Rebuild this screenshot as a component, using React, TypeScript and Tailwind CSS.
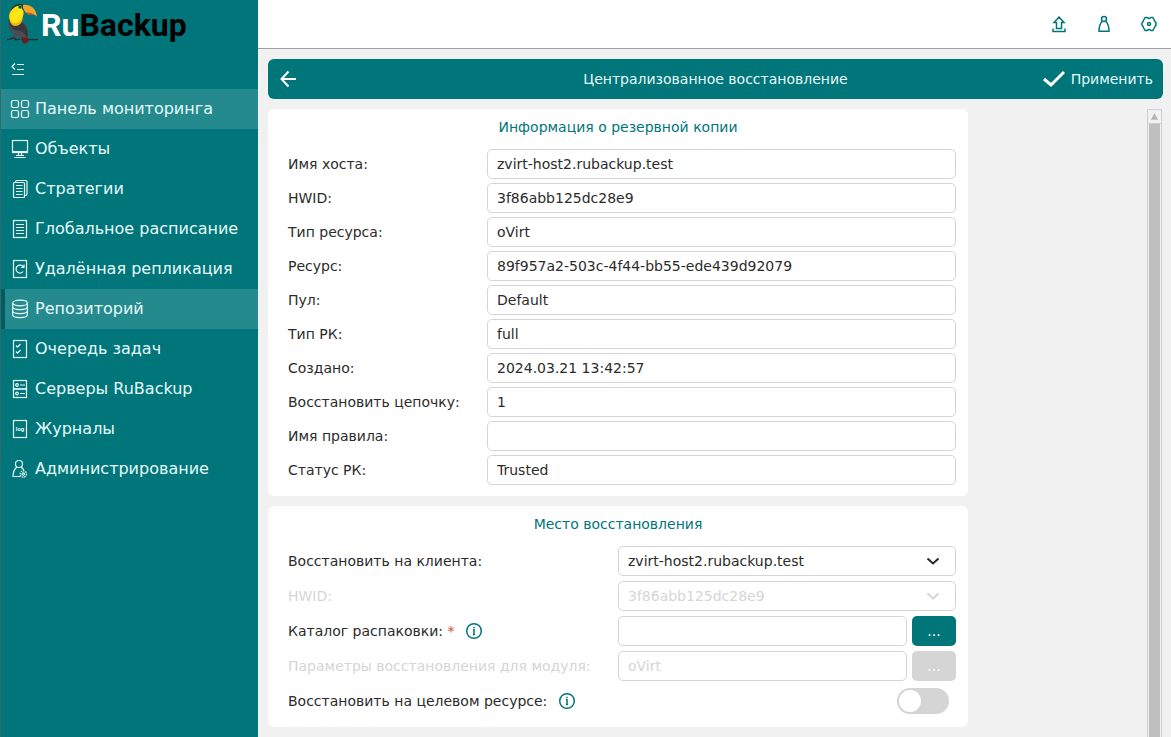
import { useState } from 'react';
import type { ReactNode } from 'react';

const NAV: { label: string; icon: ReactNode; state?: 'hover' | 'current' }[] = [
  {
    label: 'Панель мониторинга',
    state: 'hover',
    icon: (
      <>
        <rect x="1.5" y="1.5" width="7" height="7" rx="1.8" />
        <rect x="11.5" y="1.5" width="7" height="7" rx="1.8" />
        <rect x="1.5" y="11.5" width="7" height="7" rx="1.8" />
        <rect x="11.5" y="11.5" width="7" height="7" rx="1.8" />
      </>
    ),
  },
  {
    label: 'Объекты',
    icon: (
      <>
        <rect x="2.5" y="1.5" width="15" height="12" />
        <path d="M2.5 12.5h15M8.5 13.5v3M11.5 13.5v3M6 16.5h8M4.5 18.5h11" />
      </>
    ),
  },
  {
    label: 'Стратегии',
    icon: (
      <>
        <rect x="3.5" y="3.5" width="11" height="15" rx="1" />
        <path d="M5.5 3.5v-1l1-1h9.5l1 1V15l-1 1.500h-1.500M6 6.500h6.500M6 9.500h6.500M6 12.500h6.500M6 15.500h6.500" />
      </>
    ),
  },
  {
    label: 'Глобальное расписание',
    icon: (
      <>
        <rect x="3.5" y="1.5" width="13" height="17" />
        <path d="M6 5.5h8M6 8.5h8M6 11.5h8M6 14.5h8" />
      </>
    ),
  },
  {
    label: 'Удалённая репликация',
    icon: (
      <>
        <rect x="3.5" y="1.5" width="13" height="17" />
        <path d="M13.2 12.5a4 4 0 1 1 .2-4.6M14 5.5v3h-3" />
      </>
    ),
  },
  {
    label: 'Репозиторий',
    state: 'current',
    icon: (
      <>
        <ellipse cx="10" cy="4" rx="7.3" ry="2.8" />
        <path d="M2.7 4v3.8c0 1.6 3.3 2.8 7.3 2.8s7.3-1.2 7.3-2.8V4M2.7 8v3.8c0 1.6 3.3 2.8 7.3 2.8s7.3-1.2 7.3-2.8V8M2.7 12v3.8c0 1.6 3.3 2.8 7.3 2.8s7.3-1.2 7.3-2.8V12" />
      </>
    ),
  },
  {
    label: 'Очередь задач',
    icon: (
      <>
        <rect x="3.5" y="1.5" width="13" height="17" />
        <path d="M6 6.5l1.5 1.700 3-3.200M6 12.500l1.500 1.700 3-3.200" />
      </>
    ),
  },
  {
    label: 'Серверы RuBackup',
    icon: (
      <>
        <rect x="3.5" y="1.5" width="13" height="8.5" />
        <rect x="3.5" y="10" width="13" height="8.5" />
        <circle cx="7" cy="6" r="1.3" />
        <circle cx="7" cy="14.5" r="1.3" />
        <path d="M10 6h5M10 14.5h5" />
      </>
    ),
  },
  {
    label: 'Журналы',
    icon: (
      <>
        <rect x="3.5" y="1.5" width="13" height="17" />
        <text
          x="10"
          y="12"
          textAnchor="middle"
          className="font-[Roboto,sans-serif] text-[6px] font-bold"
          fill="currentColor"
          stroke="none"
        >
          log
        </text>
      </>
    ),
  },
  {
    label: 'Администрирование',
    icon: (
      <>
        <circle cx="9" cy="5" r="3.5" />
        <path d="M6.8 8C4.5 10 3 13.5 3 17.5h7M11.2 8c1 .9 1.900 2 2.500 3.200" />
        <circle cx="13.3" cy="15" r="3.2" strokeDasharray="1.6 .8" />
        <circle cx="13.3" cy="15" r="1.2" />
      </>
    ),
  },
];

const BACKUP_INFO = [
  { id: 'host', label: 'Имя хоста:', value: 'zvirt-host2.rubackup.test' },
  { id: 'hwid', label: 'HWID:', value: '3f86abb125dc28e9' },
  { id: 'resource-type', label: 'Тип ресурса:', value: 'oVirt' },
  { id: 'resource', label: 'Ресурс:', value: '89f957a2-503c-4f44-bb55-ede439d92079' },
  { id: 'pool', label: 'Пул:', value: 'Default' },
  { id: 'backup-type', label: 'Тип РК:', value: 'full' },
  { id: 'created', label: 'Создано:', value: '2024.03.21 13:42:57' },
  { id: 'chain', label: 'Восстановить цепочку:', value: '1' },
  { id: 'rule', label: 'Имя правила:', value: '' },
  { id: 'status', label: 'Статус РК:', value: 'Trusted' },
];

const FIELD =
  'h-[30px] w-full min-w-0 rounded-[5px] border border-[#d5d5d5] bg-white px-[9px] text-[#2b2b2b] outline-none disabled:text-[#d5d5d5] disabled:opacity-100';

function Toucan() {
  return (
    <svg viewBox="6 2 34 42" className="h-[42px] w-[34px] shrink-0" aria-hidden="true">
      {/* body and wing */}
      <path d="M9 17C7 25 9 32 15 35l-6 3 1 1 7-2 7 2 4-1c1-6 0-12-6-17z" fill="#4a4c51" />
      <path d="M9 18c-1 8 4 13 12 13 3 2 5 4 6 7 2-7-1-13-6-16z" fill="#36373d" />
      {/* breast */}
      <path d="M14 6c3-2 8-1 9 3 2 5-1 11-4 14-4 3-8 2-9-2-2-5 0-12 4-15z" fill="#ffe312" />
      <path d="M10 19c1 5 7 5 11 1 1-1 2-3 2-4 0 7-4 10-8 10-3 0-5-3-5-7z" fill="#efb515" />
      {/* head and beak */}
      <path d="M10 13c1-6 5-9 9-9 4 0 6 1 7 4l-3 3c-1-4-3-5-6-5-3 1-5 3-7 7z" fill="#24331f" />
      <path d="M23 5c7-1 13 3 14 12-1-2-4-3-8-3-3-1-5-3-6-6z" fill="#f4a52e" />
      <path d="M25 12c4 1 8 0 12 5-1-2-5-3-9-2z" fill="#d4561c" />
      <circle cx="20" cy="7" r="2" fill="#3aa45c" />
      <circle cx="20" cy="7" r="0.9" fill="#0b1d16" />
      {/* branch and tail */}
      <path d="M7 40l7-2 3 2M15 40l5-1M21 39.500l17 .2" stroke="#2c2426" strokeWidth="1.200" fill="none" />
      <path d="M22 37l6 1 1 3-4 3c-3-1-4-4-3-7z" fill="#6d1c1e" />
    </svg>
  );
}

function InfoButton({ label }: { label: string }) {
  return (
    <button type="button" aria-label={label} className="ml-[11px] text-[#00757a]">
      <svg viewBox="0 0 18 18" className="size-[18px]" fill="none" stroke="currentColor" strokeWidth="1.5">
        <circle cx="9" cy="9" r="7.3" />
        <path d="M8 7.800h1v4.700M8 12.500h2M9 4.800v1.500" />
      </svg>
    </button>
  );
}

function Select({ id, value, disabled }: { id: string; value: string; disabled?: boolean }) {
  return (
    <div className="relative">
      <select id={id} disabled={disabled} className={`${FIELD} appearance-none`}>
        <option>{value}</option>
      </select>
      <svg
        viewBox="0 0 12 8"
        className={`pointer-events-none absolute top-[11px] right-[17px] h-2 w-3 ${disabled ? 'text-[#d5d5d5]' : 'text-[#2b2b2b]'}`}
        fill="none"
        stroke="currentColor"
        strokeWidth="2"
      >
        <path d="M.5 1.500L6 6.500l5.500-5" />
      </svg>
    </div>
  );
}

function Sidebar() {
  return (
    <aside className="w-[258px] shrink-0 border-l border-[#35696c] bg-[#00757a] text-[#e6fafa]">
      <a href="#home" className="flex h-[50px] items-center gap-px pb-1 pl-[5px]">
        <Toucan />
        <span className="pt-1 font-[Roboto,sans-serif] text-[32px] leading-none font-bold text-white">
          Ru<span className="text-black">Backup</span>
        </span>
      </a>
      <button type="button" aria-label="Свернуть меню" className="flex h-[39px] items-center pl-[10px]">
        <svg viewBox="0 0 14 14" className="size-[14px]" fill="none" stroke="currentColor" strokeWidth="1.2">
          <path d="M4 .5L1 3.500l3 3M6 1.500h7M6 6.500h7M1 11.500h12" />
        </svg>
      </button>
      <nav>
        {NAV.map((item) => (
          <a
            key={item.label}
            href="#nav"
            aria-current={item.state === 'current' ? 'page' : undefined}
            className={`flex h-10 items-center gap-[5px] border-l-4 pl-[5px] text-base whitespace-nowrap ${
              item.state === 'current'
                ? 'border-[#005c60] bg-[#248a8e]'
                : item.state === 'hover'
                  ? 'border-[#248a8e] bg-[#248a8e]'
                  : 'border-transparent'
            }`}
          >
            <svg viewBox="0 0 20 20" className="size-5 shrink-0" fill="none" stroke="currentColor" strokeWidth="1.2">
              {item.icon}
            </svg>
            {item.label}
          </a>
        ))}
      </nav>
    </aside>
  );
}

function TopBar() {
  return (
    <header className="flex h-[49px] shrink-0 items-center justify-end gap-[25px] border-b border-[#9aa0a3] bg-white pr-3 text-[#00757a]">
      <button type="button" aria-label="Загрузить">
        <svg viewBox="0 0 20 20" className="size-5" fill="none" stroke="currentColor" strokeWidth="1.5">
          <path d="M10 3l5 5.500h-2.500v6h-5v-6H5zM4 14.500v3h12v-3" />
        </svg>
      </button>
      <button type="button" aria-label="Профиль">
        <svg viewBox="0 0 20 20" className="size-5" fill="none" stroke="currentColor" strokeWidth="1.5">
          <circle cx="10" cy="5" r="2.5" />
          <path d="M8.300 7.200C6 9.500 5 12.500 5 17.200h10c0-4.700-1-7.700-3.300-10" />
        </svg>
      </button>
      <button type="button" aria-label="Настройки">
        <svg viewBox="0 0 20 20" className="size-5" fill="none" stroke="currentColor" strokeWidth="1.5" strokeLinejoin="round">
          <path d="M6.200 3.400h1.600L10 4.700l2.200-1.300h1.600l1.500 2.600.6 1.600 1.100 1.200v2.400l-1.100 1.200-.6 1.600-1.500 2.600h-1.600L10 15.300l-2.200 1.300H6.200L4.700 14l-.6-1.600L3 11.200V8.800l1.100-1.200L4.700 6z" />
          <circle cx="10" cy="10" r="1.5" />
        </svg>
      </button>
    </header>
  );
}

function Card({ title, children }: { title: string; children: ReactNode }) {
  return (
    <section className="rounded-md bg-white pr-3 pb-[11px] pl-5">
      <h2 className="mb-1 h-9 pr-2 text-center leading-9 text-[#00757a]">{title}</h2>
      {children}
    </section>
  );
}

export default function App() {
  const [toTarget, setToTarget] = useState(false);

  return (
    <div className="flex h-screen overflow-hidden bg-[#f1f1f1] font-['DejaVu_Sans',sans-serif] text-sm text-[#2b2b2b]">
      <Sidebar />
      <div className="flex min-w-0 flex-1 flex-col">
        <TopBar />
        <main className="flex min-h-0 flex-1 flex-col gap-[10px] pt-[10px] pr-2 pl-[10px]">
          <div className="grid h-10 shrink-0 grid-cols-[1fr_auto_1fr] items-center rounded-md bg-[#00757a] px-[10px] text-[#e6fafa]">
            <button type="button" aria-label="Назад" className="justify-self-start text-white">
              <svg viewBox="0 0 20 20" className="size-5" fill="none" stroke="currentColor" strokeWidth="2">
                <path d="M18 10H3.500M10.500 2.500L3.500 10l7 7.500" />
              </svg>
            </button>
            <h1>Централизованное восстановление</h1>
            <button type="button" className="flex items-center gap-[5px] justify-self-end">
              <svg viewBox="0 0 24 18" className="h-[18px] w-6 text-white" fill="none" stroke="currentColor" strokeWidth="3">
                <path d="M2 9l7 6L22 2" />
              </svg>
              Применить
            </button>
          </div>

          <div className="flex min-h-0 flex-1 justify-between">
            <form className="flex w-full max-w-[700px] flex-col gap-[10px]">
              <Card title="Информация о резервной копии">
                <div className="grid grid-cols-[199px_1fr] items-center gap-y-1">
                  {BACKUP_INFO.map((f) => (
                    <div key={f.id} className="contents">
                      <label htmlFor={f.id}>{f.label}</label>
                      <input id={f.id} readOnly value={f.value} className={FIELD} />
                    </div>
                  ))}
                </div>
              </Card>

              <Card title="Место восстановления">
                <div className="grid grid-cols-[330px_1fr] items-center gap-y-[5px]">
                  <label htmlFor="client">Восстановить на клиента:</label>
                  <Select id="client" value="zvirt-host2.rubackup.test" />

                  <label htmlFor="client-hwid" className="text-[#d5d5d5]">
                    HWID:
                  </label>
                  <Select id="client-hwid" value="3f86abb125dc28e9" disabled />

                  <div className="flex items-center">
                    <label htmlFor="unpack-dir">
                      Каталог распаковки: <span className="text-[#d9483b]">*</span>
                    </label>
                    <InfoButton label="О каталоге распаковки" />
                  </div>
                  <div className="flex gap-[5px]">
                    <input id="unpack-dir" className={FIELD} />
                    <button type="button" className="w-11 shrink-0 rounded-[5px] bg-[#00757a] text-white">
                      ...
                    </button>
                  </div>

                  <label htmlFor="module-params" className="whitespace-nowrap text-[#d5d5d5]">
                    Параметры восстановления для модуля:
                  </label>
                  <div className="flex gap-[5px]">
                    <input id="module-params" disabled value="oVirt" className={FIELD} />
                    <button type="button" disabled className="w-11 shrink-0 rounded-[5px] bg-[#d5d5d5] text-white">
                      ...
                    </button>
                  </div>

                  <div className="flex items-center">
                    <label htmlFor="to-target">Восстановить на целевом ресурсе:</label>
                    <InfoButton label="О целевом ресурсе" />
                  </div>
                  <div className="flex h-[30px] items-center justify-end pr-[7px]">
                    <input
                      id="to-target"
                      type="checkbox"
                      role="switch"
                      checked={toTarget}
                      onChange={(e) => setToTarget(e.target.checked)}
                      className="flex h-[26px] w-[52px] appearance-none items-center rounded-full bg-[#d5d5d5] px-[2px] before:size-[22px] before:rounded-full before:bg-white checked:justify-end checked:bg-[#00757a]"
                    />
                  </div>
                </div>
              </Card>
            </form>

            {/* scroll track */}
            <div aria-hidden="true" className="mr-px flex w-[15px] shrink-0 flex-col border border-b-0 border-[#d0d0d0]">
              <svg viewBox="0 0 13 14" className="h-[14px] w-[13px] border-b border-[#d0d0d0] text-[#b4b4b4]">
                <path d="M6.500 3.500l4 7h-8z" fill="currentColor" />
              </svg>
              <div className="mx-px flex-1 bg-[#bfbfbf]" />
            </div>
          </div>
        </main>
      </div>
    </div>
  );
}
